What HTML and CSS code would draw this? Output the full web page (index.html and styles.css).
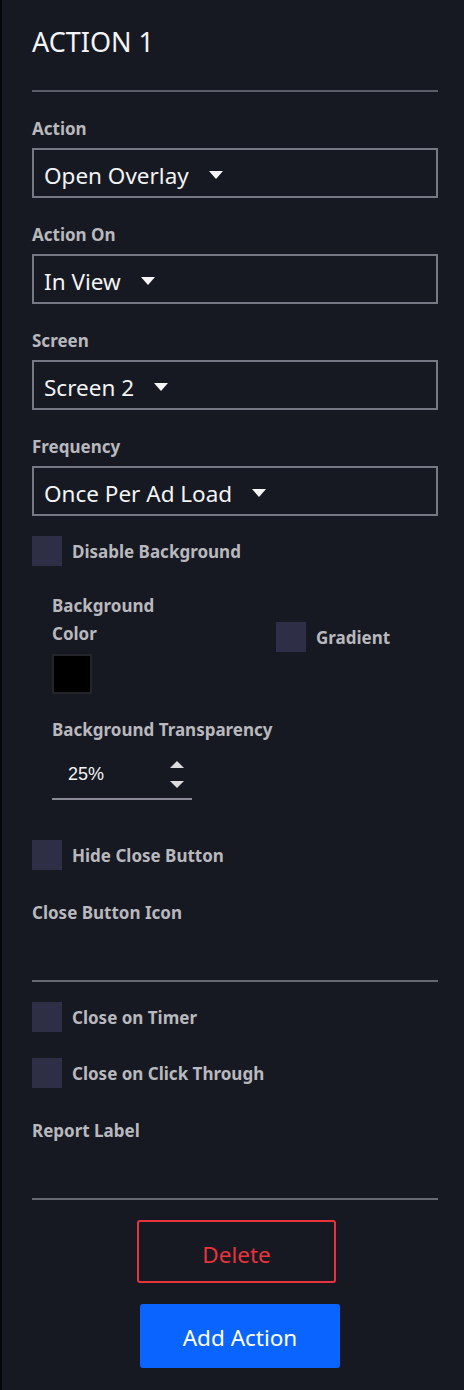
FILE: index.html
```html
<!DOCTYPE html>
<html>
<head>
<meta charset="utf-8">
<link rel="stylesheet" href="styles.css">
</head>
<body>
<div class="panel">
  <h1 class="title">ACTION 1</h1>
  <div class="rule"></div>

  <div class="field">
    <div class="label">Action</div>
    <div class="select"><span>Open Overlay</span><span class="caret"></span></div>
  </div>
  <div class="field">
    <div class="label">Action On</div>
    <div class="select"><span>In View</span><span class="caret"></span></div>
  </div>
  <div class="field">
    <div class="label">Screen</div>
    <div class="select"><span>Screen 2</span><span class="caret"></span></div>
  </div>
  <div class="field last">
    <div class="label">Frequency</div>
    <div class="select"><span>Once Per Ad Load</span><span class="caret"></span></div>
  </div>

  <div class="check"><span class="box"></span><span class="label">Disable Background</span></div>

  <div class="sub">
    <div class="bg-row">
      <div class="bg-color">
        <div class="label tall">Background Color</div>
        <div class="swatch"></div>
      </div>
      <div class="check gradient"><span class="box"></span><span class="label">Gradient</span></div>
    </div>
    <div class="label trans-label">Background Transparency</div>
    <div class="number">
      <span class="num-value">25%</span>
      <span class="spin"><span class="up"></span><span class="down"></span></span>
    </div>
  </div>

  <div class="check hide-close"><span class="box"></span><span class="label">Hide Close Button</span></div>

  <div class="label block-label">Close Button Icon</div>
  <div class="empty-input"></div>

  <div class="check timer"><span class="box"></span><span class="label">Close on Timer</span></div>
  <div class="check click"><span class="box"></span><span class="label">Close on Click Through</span></div>

  <div class="label block-label">Report Label</div>
  <div class="empty-input"></div>

  <div class="buttons">
    <button class="btn delete">Delete</button>
    <button class="btn add">Add Action</button>
  </div>
</div>
</body>
</html>
```

FILE: styles.css
```css
html, body {
  margin: 0;
  padding: 0;
  background: #161922;
}
body {
  font-family: "Noto Sans", "Open Sans", sans-serif;
  color: #f2f2f2;
  border-left: 2px solid #07080b;
  min-height: 1390px;
  box-sizing: border-box;
}
.panel {
  padding: 24px 26px 0 30px;
  display: flex;
  flex-direction: column;
}
.title {
  margin: 0;
  font-size: 27px;
  font-weight: 400;
  line-height: 36px;
  color: #f4f4f6;
}
.rule {
  margin-top: 30px;
  height: 0;
  border-top: 2px solid #5a5c67;
  margin-bottom: 25px;
}
.label {
  font-size: 17px;
  font-weight: 700;
  line-height: 24px;
  color: #b8b8bd;
}
.field {
  display: flex;
  flex-direction: column;
  gap: 7px;
  margin-bottom: 25px;
}
.field.last {
  margin-bottom: 20px;
}
.select {
  box-sizing: border-box;
  height: 50px;
  border: 2px solid #767883;
  padding: 4px 0 0 10px;
  display: flex;
  align-items: center;
  gap: 20px;
  font-size: 22.5px;
  color: #f3f3f3;
}
.caret {
  width: 0;
  height: 0;
  border-left: 7.5px solid transparent;
  border-right: 7.5px solid transparent;
  border-top: 8px solid #f6f6f6;
  margin-top: 0;
}
.check {
  display: flex;
  align-items: center;
  gap: 10px;
  height: 30px;
}
.check .label {
  padding-top: 2px;
}
.box {
  width: 30px;
  height: 30px;
  background: #2e2f47;
  flex: none;
}
.sub {
  padding-left: 20px;
  margin-top: 25px;
  display: flex;
  flex-direction: column;
}
.bg-row {
  display: flex;
  align-items: flex-start;
}
.bg-color {
  width: 224px;
  display: flex;
  flex-direction: column;
}
.label.tall {
  line-height: 28px;
  width: 112px;
  padding-top: 1px;
}
.swatch {
  margin-top: 6px;
  width: 40px;
  height: 40px;
  box-sizing: border-box;
  background: #000;
  border: 2px solid #24252b;
}
.gradient {
  margin-top: 31px;
}
.trans-label {
  margin-top: 24px;
}
.number {
  margin-top: 6px;
  width: 140px;
  height: 52px;
  box-sizing: border-box;
  border-bottom: 2px solid #8a8b96;
  display: flex;
  align-items: center;
  justify-content: space-between;
  padding: 0 8px 0 16px;
}
.num-value {
  font-family: "Liberation Sans", Arial, sans-serif;
  font-size: 18px;
  color: #f4f4f4;
  margin-top: 3px;
}
.spin {
  display: flex;
  flex-direction: column;
  gap: 13px;
  margin-top: 2px;
}
.up {
  width: 0;
  height: 0;
  border-left: 7.5px solid transparent;
  border-right: 7.5px solid transparent;
  border-bottom: 7px solid #dcdcdc;
}
.down {
  width: 0;
  height: 0;
  border-left: 7.5px solid transparent;
  border-right: 7.5px solid transparent;
  border-top: 7px solid #dcdcdc;
}
.hide-close {
  margin-top: 40px;
}
.block-label {
  margin-top: 31px;
}
.empty-input {
  height: 55px;
  border-bottom: 2px solid #666872;
}
.timer {
  margin-top: 20px;
}
.click {
  margin-top: 26px;
}
.buttons {
  display: flex;
  flex-direction: column;
  align-items: flex-start;
  margin-top: 20px;
  gap: 21px;
}
.btn {
  font-family: "Noto Sans", "Open Sans", sans-serif;
  font-size: 22.5px;
  font-weight: 400;
  border-radius: 3px;
  cursor: pointer;
  box-sizing: border-box;
  padding: 0;
}
.delete {
  margin-left: 105px;
  width: 199px;
  height: 63px;
  background: transparent;
  border: 2px solid #e8333b;
  color: #e8333b;
  padding-top: 6px;
}
.add {
  margin-left: 108px;
  width: 200px;
  height: 64px;
  background: #0a64ff;
  border: none;
  color: #ffffff;
  padding-top: 2px;
}
```
